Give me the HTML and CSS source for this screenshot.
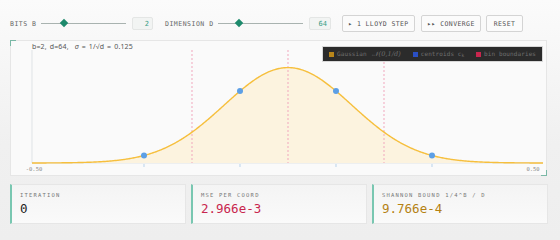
FILE: index.html
```html
<!DOCTYPE html>
<html lang="en">
<head>
  <meta charset="UTF-8">
  <title>Lloyd-Max Quantizer</title>
  <link rel="stylesheet" href="styles.css">
</head>
<body>

<div class="controles">
  <span class="rotulo rotulo-bits">BITS B</span>
  <div class="slider"><span class="thumb" style="left: 27%;"></span></div>
  <span class="valor">2</span>
  <span class="rotulo rotulo-dim">DIMENSION D</span>
  <div class="slider"><span class="thumb" style="left: 25%;"></span></div>
  <span class="valor valor-largo">64</span>
  <button class="botao botao-passo">&#9656; 1 LLOYD STEP</button>
  <button class="botao botao-conv">&#9656;&#9656; CONVERGE</button>
  <button class="botao botao-reset">RESET</button>
</div>

<div class="painel">
  <span class="canto canto-sup"></span>
  <span class="canto canto-inf"></span>
  <p class="anotacao">b=2, d=64, &nbsp;<i>σ</i> = 1/√d = 0.125</p>
  <div class="legenda">
    <span class="item"><i class="cor cor-gauss"></i>Gaussian <em>𝒩(0,1/d)</em></span>
    <span class="item"><i class="cor cor-centro"></i>centroids c<sub>k</sub></span>
    <span class="item"><i class="cor cor-bin"></i>bin boundaries</span>
  </div>
  <svg class="grafico" id="grafico" width="537" height="136" viewBox="0 0 537 136">
    <line class="eixo" x1="22" y1="10" x2="22" y2="123"></line>
    <line class="eixo" x1="22" y1="123" x2="533" y2="123"></line>
    <path class="area" id="area" d=""></path>
    <line class="limite" x1="182" y1="10" x2="182" y2="123"></line>
    <line class="limite" x1="278" y1="10" x2="278" y2="123"></line>
    <line class="limite" x1="374" y1="10" x2="374" y2="123"></line>
    <path class="curva" id="curva" d=""></path>
    <g id="centroides"></g>
    <text class="escala" x="24" y="131" text-anchor="middle">-0.50</text>
    <text class="escala" x="523" y="131" text-anchor="middle">0.50</text>
  </svg>
</div>

<div class="cartoes">
  <div class="cartao">
    <span class="cartao-rotulo">ITERATION</span>
    <span class="cartao-valor">0</span>
  </div>
  <div class="cartao">
    <span class="cartao-rotulo">MSE PER COORD</span>
    <span class="cartao-valor valor-mse">2.966e-3</span>
  </div>
  <div class="cartao">
    <span class="cartao-rotulo">SHANNON BOUND 1/4^B / D</span>
    <span class="cartao-valor valor-shannon">9.766e-4</span>
  </div>
</div>

<script src="script.js"></script>
</body>
</html>
```

FILE: styles.css
```css
body {
  margin: 0;
  width: 560px;
  height: 240px;
  overflow: hidden;
  font-family: "DejaVu Sans Mono", monospace;
  background: linear-gradient(#fbfbfb, #f0f0f0 60%, #eeeeee);
}

.controles {
  display: flex;
  align-items: center;
  height: 17px;
  padding: 15px 0 0 10px;
  white-space: nowrap;
}

.rotulo {
  font-size: 6.5px;
  letter-spacing: 0.5px;
  color: #666;
}

.rotulo-bits {
  width: 31px;
}

.rotulo-dim {
  width: 53px;
  margin-left: 12px;
}

.slider {
  position: relative;
  width: 85px;
  height: 1px;
  background: #a9b3b0;
}

.thumb {
  position: absolute;
  top: -3px;
  width: 6px;
  height: 6px;
  margin-left: -3px;
  background: #1d8a6c;
  transform: rotate(45deg);
}

.valor {
  width: 21px;
  height: 13px;
  margin-left: 6px;
  box-sizing: border-box;
  padding-right: 3px;
  text-align: right;
  font-size: 7px;
  line-height: 12px;
  color: #3a9e86;
  background: #f2f4f3;
  border: 1px solid #e4e6e5;
  border-radius: 2px;
}

.valor-largo {
  width: 22px;
}

.botao {
  height: 17px;
  padding: 0;
  margin-left: 11px;
  font-family: "DejaVu Sans Mono", monospace;
  font-size: 6.5px;
  letter-spacing: 0.4px;
  color: #555;
  background: #fbfbfb;
  border: 1px solid #d4d4d4;
  border-radius: 2px;
}

.botao-passo {
  width: 73px;
}

.botao-conv {
  width: 60px;
  margin-left: 6px;
}

.botao-reset {
  width: 37px;
  margin-left: 5px;
}

.painel {
  position: relative;
  width: 537px;
  height: 136px;
  margin: 8px 0 0 10px;
  background: #fafafa;
  border: 1px solid #e6e6e6;
  box-sizing: border-box;
}

.canto {
  position: absolute;
  width: 5px;
  height: 5px;
  border-color: #7ab8a6;
  border-style: solid;
}

.canto-sup {
  top: -1px;
  left: -1px;
  border-width: 1px 0 0 1px;
}

.canto-inf {
  right: -1px;
  bottom: -1px;
  border-width: 0 1px 1px 0;
}

.grafico {
  display: block;
  position: absolute;
  top: -1px;
  left: -1px;
}

.eixo {
  stroke: #dfe3e6;
  stroke-width: 1;
}

.area {
  fill: #fcf3df;
}

.curva {
  fill: none;
  stroke: #f6bf3d;
  stroke-width: 1.4;
}

.limite {
  stroke: #f1a7bd;
  stroke-width: 1;
  stroke-dasharray: 2 2;
}

.centroide {
  fill: #5c9fe6;
}

.tick {
  stroke: #b9d3ea;
  stroke-width: 1;
}

.escala {
  font-family: "DejaVu Sans Mono", monospace;
  font-size: 5.5px;
  fill: #888;
}

.anotacao {
  position: absolute;
  top: 1px;
  left: 21px;
  margin: 0;
  font-family: "Noto Sans", sans-serif;
  font-size: 7px;
  letter-spacing: 0.15px;
  word-spacing: 1px;
  color: #555;
  z-index: 1;
}

.legenda {
  position: absolute;
  top: 5px;
  left: 311px;
  width: 221px;
  height: 16px;
  box-sizing: border-box;
  padding-left: 6px;
  background: #2b2b2b;
  border: 1px solid #d8d8d8;
  font-size: 6px;
  line-height: 14px;
  letter-spacing: 0.1px;
  color: #6f6f6f;
  white-space: nowrap;
  z-index: 1;
}

.legenda em {
  margin-left: 2px;
  font-family: "DejaVu Serif", serif;
  font-size: 6.5px;
}

.legenda sub {
  font-size: 4.5px;
  vertical-align: -1px;
}

.item {
  display: inline-block;
  margin-right: 8px;
}

.cor {
  display: inline-block;
  width: 5px;
  height: 5px;
  margin-right: 3px;
  vertical-align: -0.5px;
}

.cor-gauss {
  background: #b8861a;
}

.cor-centro {
  background: #2a4fc4;
}

.cor-bin {
  background: #c8264e;
}

.cartoes {
  display: flex;
  gap: 5px;
  padding: 8px 0 0 10px;
}

.cartao {
  display: flex;
  flex-direction: column;
  width: 176px;
  height: 40px;
  box-sizing: border-box;
  padding: 7px 0 0 8px;
  background: linear-gradient(#f4f4f4, #fafafa);
  border: 1px solid #e6e6e6;
  border-left: 2px solid #79c7b1;
}

.cartao-rotulo {
  font-size: 5.5px;
  letter-spacing: 1.2px;
  color: #777;
}

.cartao-valor {
  margin-top: 3px;
  font-size: 12.5px;
  color: #222;
}

.valor-mse {
  color: #c8264e;
}

.valor-shannon {
  color: #b58213;
}
```

FILE: script.js
```js
const svgNS = 'http://www.w3.org/2000/svg';
const sigma = 0.125;
const meio = 278;
const escala = 511;
const base = 123;
const altura = 95.4;

function pdf(u) {
  return Math.exp(-(u * u) / (2 * sigma * sigma));
}

let pontos = [];
for (let px = 22; px <= 533; px += 1) {
  const u = (px - meio) / escala;
  pontos.push(px + ',' + (base - altura * pdf(u)).toFixed(2));
}

document.getElementById('curva').setAttribute('d', 'M' + pontos.join(' L'));
document.getElementById('area').setAttribute('d', 'M22,' + base + ' L' + pontos.join(' L') + ' L533,' + base + ' Z');

// centroides iniciais (quantizador uniforme)
const centroides = [-0.28125, -0.09375, 0.09375, 0.28125];
const grupo = document.getElementById('centroides');

centroides.forEach(function (c) {
  const x = meio + c * 512;
  const tick = document.createElementNS(svgNS, 'line');
  tick.setAttribute('class', 'tick');
  tick.setAttribute('x1', x);
  tick.setAttribute('x2', x);
  tick.setAttribute('y1', base + 1);
  tick.setAttribute('y2', base + 4);
  grupo.appendChild(tick);

  const ponto = document.createElementNS(svgNS, 'circle');
  ponto.setAttribute('class', 'centroide');
  ponto.setAttribute('cx', x);
  ponto.setAttribute('cy', base - altura * pdf(c));
  ponto.setAttribute('r', 3);
  grupo.appendChild(ponto);
});
```
